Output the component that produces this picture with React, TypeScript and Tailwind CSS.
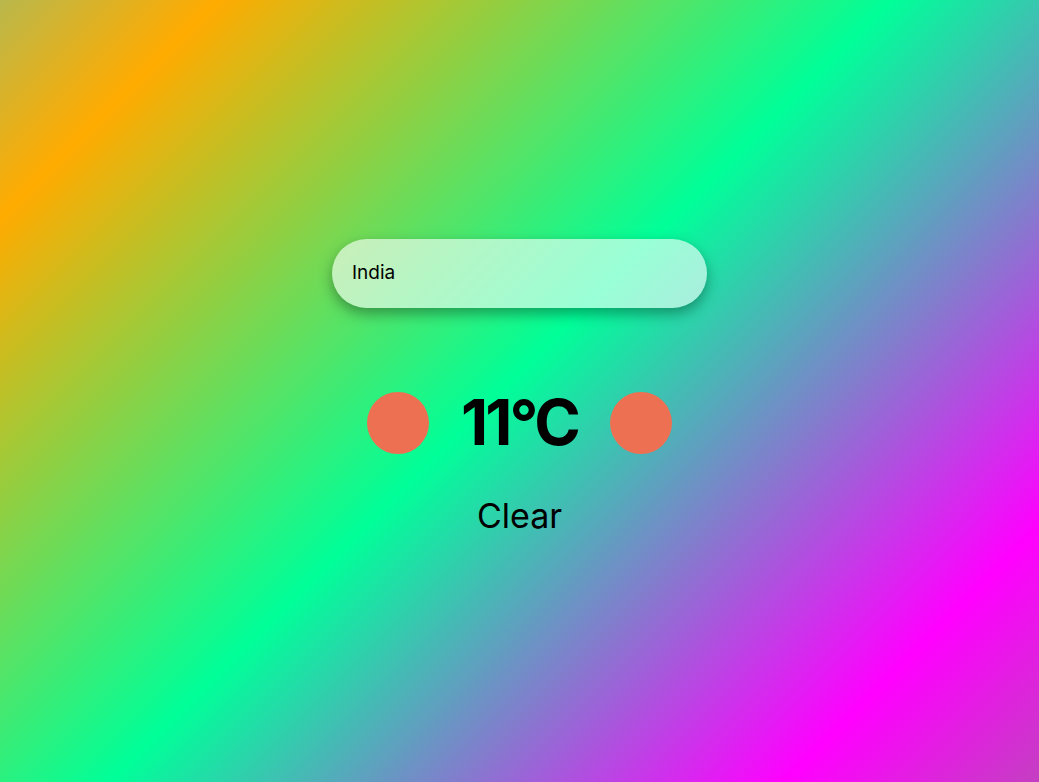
import React from "react";

export default function App() {
  return (
    <div
      className="w-full h-screen overflow-hidden flex flex-col items-center bg-[linear-gradient(135deg,#b9b84c_0%,#ffab00_12%,#00ff99_49%,#ff00ff_86%,#c43fc2_100%)]"
      style={{ fontFamily: "Inter, 'Open Sans', sans-serif" }}
    >
      <div className="mt-[239px] w-[375px] h-[69px] rounded-full bg-white/60 shadow-[0_6px_14px_rgba(0,0,0,0.35)] flex items-center px-5">
        <input
          autoFocus
          defaultValue="India"
          className="w-full bg-transparent outline-none border-none text-[19px] text-black caret-black"
          style={{ fontFamily: "Inter, 'Open Sans', sans-serif" }}
        />
      </div>
      <div className="mt-[83px] flex items-center gap-8">
        <div className="w-[62px] h-[62px] rounded-full bg-[#ee7052]" />
        <div className="text-[63px] font-bold leading-none text-black tracking-[-3px]">11°C</div>
        <div className="w-[62px] h-[62px] rounded-full bg-[#ee7052]" />
      </div>
      <div className="mt-[45px] text-[34px] leading-none text-black">Clear</div>
    </div>
  );
}
